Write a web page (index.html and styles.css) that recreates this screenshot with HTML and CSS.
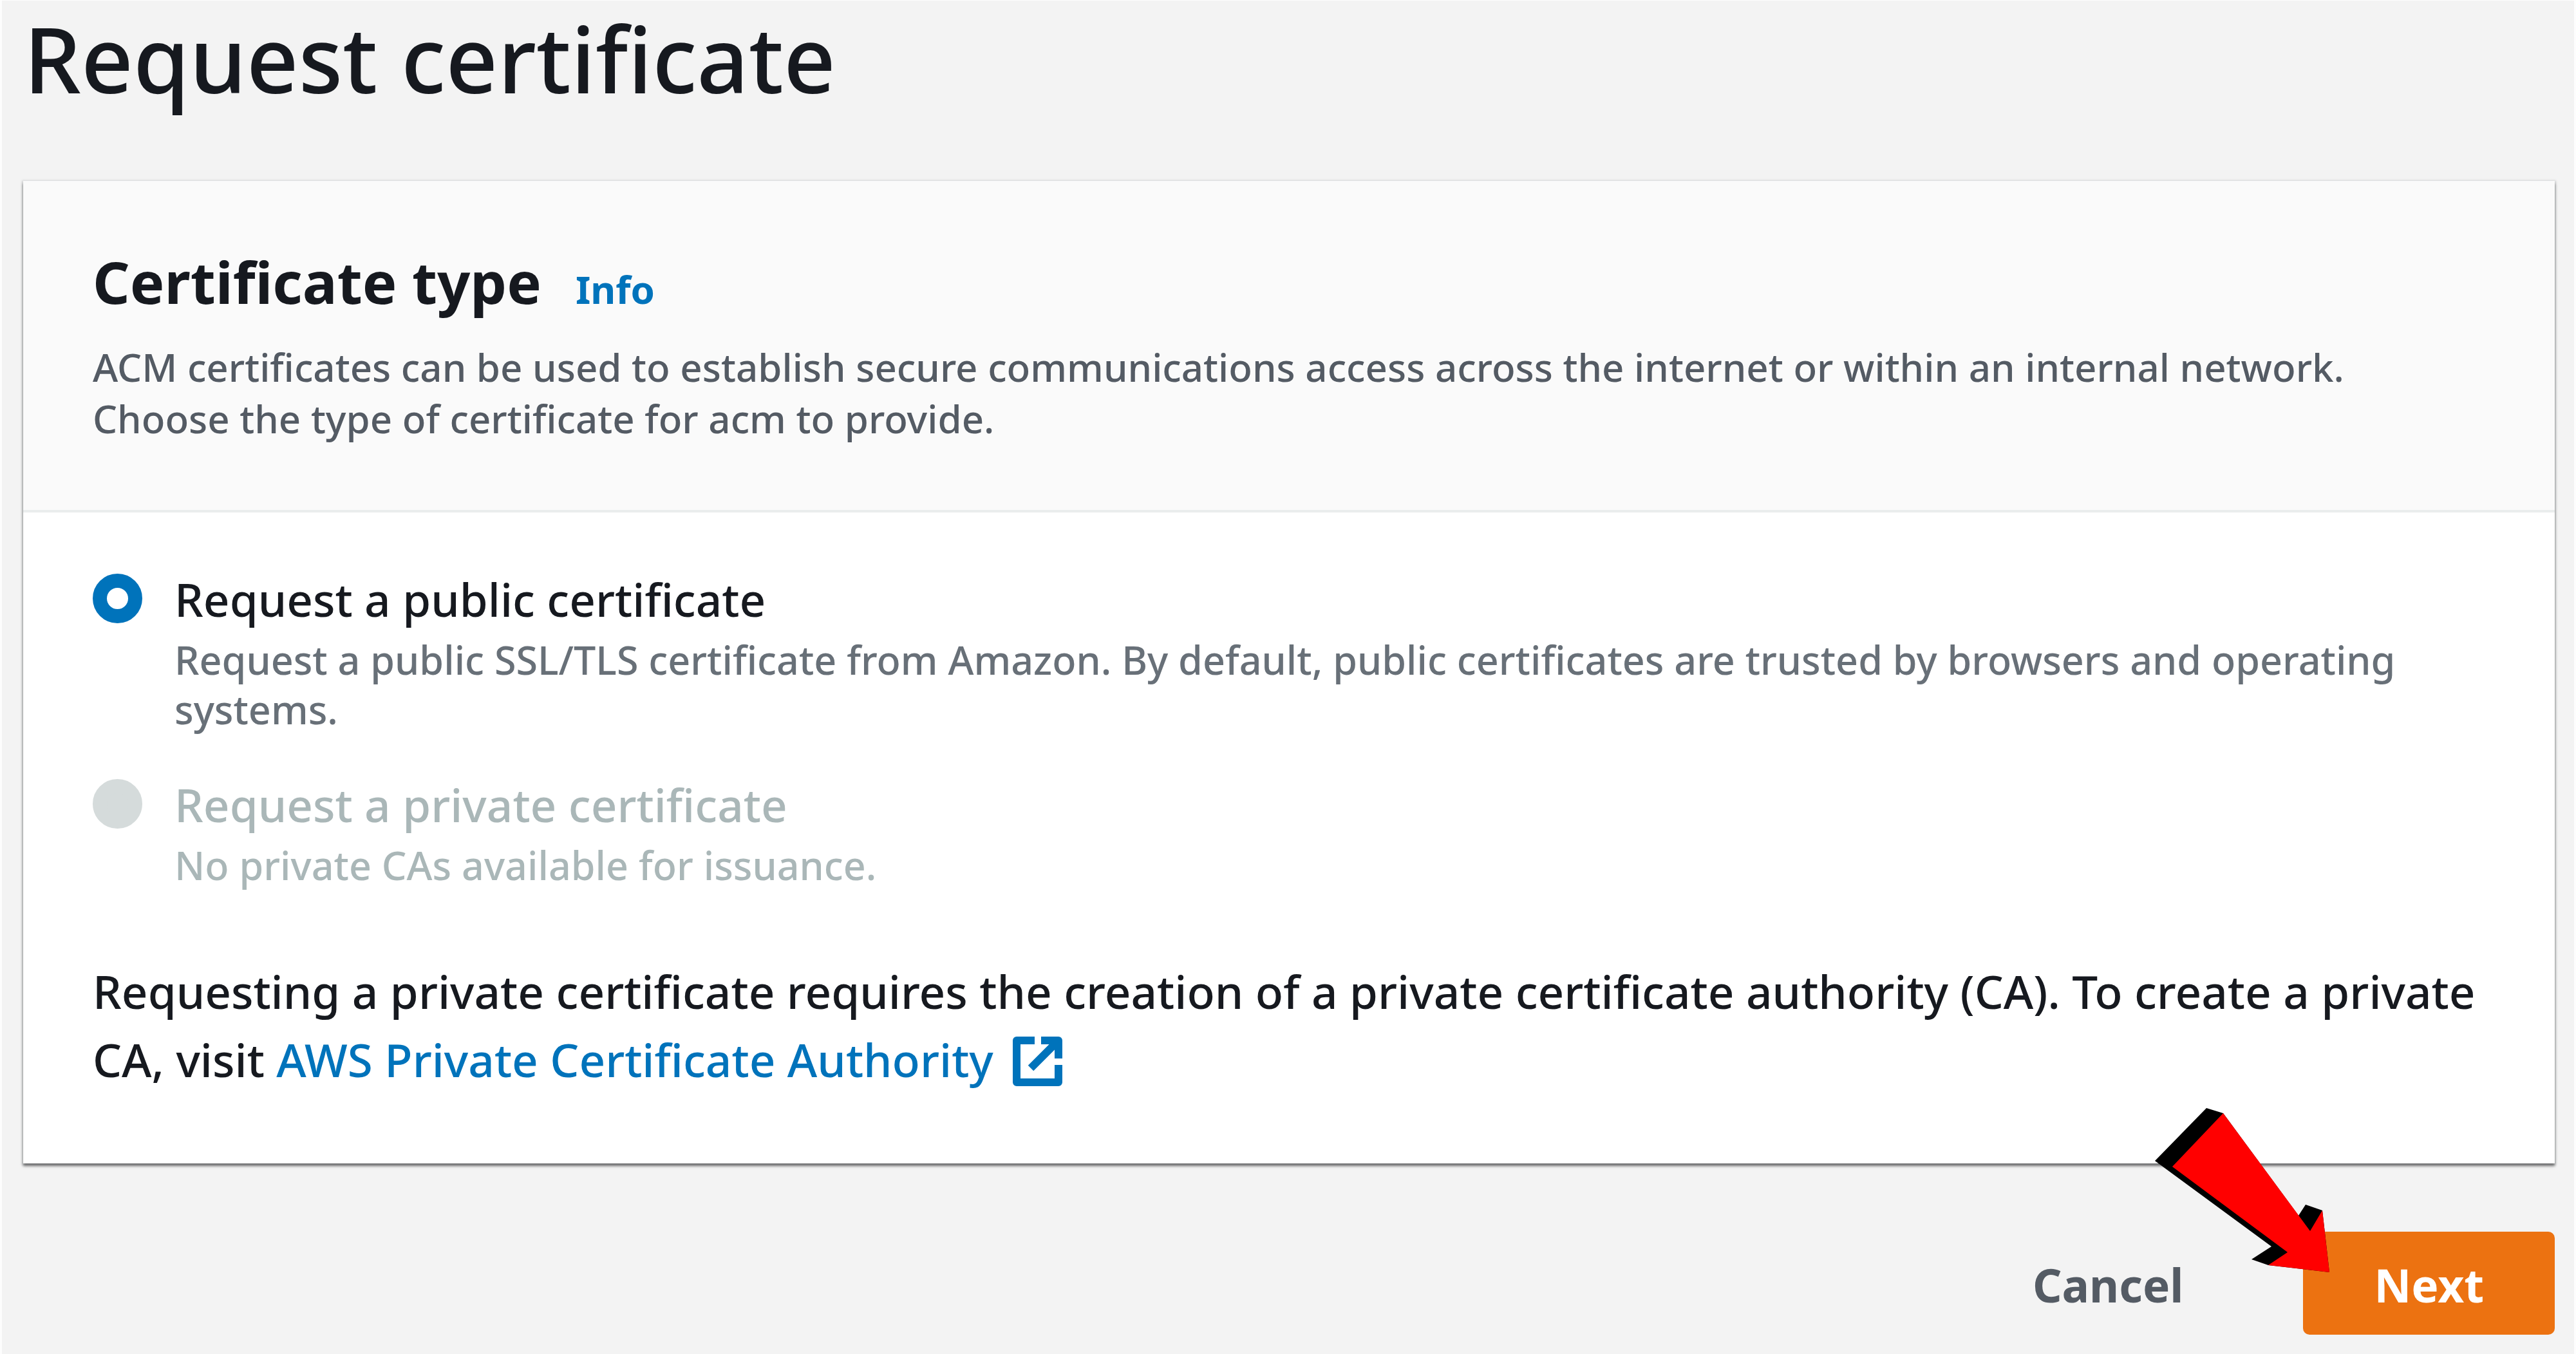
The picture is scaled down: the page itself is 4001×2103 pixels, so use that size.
FILE: index.html
```
<!DOCTYPE html>
<html lang="en">
<head>
  <meta charset="UTF-8">
  <title>Request certificate</title>
  <meta name="viewport" content="width=device-width, initial-scale=1.0">
  <link rel="stylesheet" href="styles.css">
</head>
<body>
  <main class="page">
    <h1>Request certificate</h1>

    <form class="form">
      <section class="card">
        <header class="card-header">
          <div class="card-title">
            <h2>Certificate type</h2>
            <a class="info" href="#">Info</a>
          </div>
          <p class="card-desc">ACM certificates can be used to establish secure communications access across the internet or within an internal network. Choose the type of certificate for acm to provide.</p>
        </header>

        <div class="card-body">
          <div class="options">
            <div class="option">
              <input type="radio" name="certType" id="public" aria-describedby="publicHint" checked>
              <div class="option-text">
                <label for="public">Request a public certificate</label>
                <p id="publicHint">Request a public SSL/TLS certificate from Amazon. By default, public certificates are trusted by browsers and operating systems.</p>
              </div>
            </div>
            <div class="option disabled">
              <input type="radio" name="certType" id="private" aria-describedby="privateHint" disabled>
              <div class="option-text">
                <label for="private">Request a private certificate</label>
                <p id="privateHint">No private CAs available for issuance.</p>
              </div>
            </div>
          </div>

          <p class="note">Requesting a private certificate requires the creation of a private certificate authority (CA). To create a private CA, visit <a href="#">AWS Private Certificate Authority <svg class="external" viewBox="0 0 77 77" aria-hidden="true">
            <path d="M34 6H6v65h65V44M44 6h27v28M71 6L28 49" fill="none" stroke="currentColor" stroke-width="12" stroke-linejoin="round"/>
          </svg></a></p>
        </div>
      </section>

      <div class="actions">
        <button type="button" class="btn cancel">Cancel</button>
        <div class="next-wrap">
          <button type="submit" class="btn next">Next</button>
          <svg class="pointer" viewBox="0 0 271 255" aria-hidden="true">
            <path d="M80 0L106 8L223 167L234 150L260 159L271 255L176 244L150 235L181 215L0 82Z" fill="#000"/>
            <path d="M106 8L241 191L260 159L271 255L176 244L206 224L27 91Z" fill="#f00"/>
          </svg>
        </div>
      </div>
    </form>
  </main>
</body>
</html>
```
FILE: styles.css
```
* {
  box-sizing: border-box;
}

body {
  margin: 0;
  font-family: 'Noto Sans', sans-serif;
  font-size: 71px;
  font-weight: 500;
  color: #16191f;
  background: #f3f3f3;
}

h1, h2, p {
  margin: 0;
}

a {
  color: #0073bb;
  text-decoration: none;
}

.page {
  min-height: 100vh;
  padding: 0 30px 30px;
  border: solid #fdfdfd;
  border-width: 1px 3px 0;
}

h1 {
  padding-left: 4px;
  font-size: 141px;
  font-weight: 500;
  line-height: 178px;
}

.card {
  margin: 102px 0 106px 3px;
  background: #fff;
  box-shadow: 0 4px 4px 0 rgba(0, 0, 0, 0.5), 0 1px 3px 2px rgba(0, 28, 36, 0.12);
}

.card-header {
  padding: 96px 108px 102px;
  background: #fafafa;
  border-bottom: 4px solid #eaeded;
}

.card-title {
  display: flex;
  align-items: baseline;
  gap: 53px;
}

h2 {
  font-size: 90px;
  font-weight: 700;
  line-height: 120px;
}

.info {
  font-size: 60px;
  font-weight: 700;
  line-height: 80px;
}

.card-desc {
  margin-top: 33px;
  font-size: 60px;
  line-height: 80px;
  color: #545b64;
}

.card-body {
  padding: 90px 108px 108px;
}

.options {
  display: flex;
  flex-direction: column;
  gap: 65px;
}

.option {
  display: flex;
  align-items: flex-start;
  gap: 50px;
}

.option input {
  appearance: none;
  flex: none;
  width: 77px;
  height: 77px;
  margin: 5px 0 0;
  border: 22px solid #0073bb;
  border-radius: 50%;
  background: #fff;
}

.option label {
  display: block;
  line-height: 90px;
}

.option p {
  margin-top: 10px;
  font-size: 61px;
  line-height: 77px;
  color: #687078;
}

.option.disabled input {
  border-color: #d5dbdb;
  background: #d5dbdb;
}

.option.disabled label,
.option.disabled p {
  color: #aab7b8;
}

.note {
  margin-top: 105px;
  line-height: 106px;
}

.external {
  width: 77px;
  height: 77px;
  margin-left: 12px;
  vertical-align: -14px;
}

.actions {
  display: flex;
  justify-content: flex-end;
  gap: 76px;
}

.btn {
  height: 160px;
  padding: 4px 110px 0;
  border: none;
  border-radius: 10px;
  font-family: inherit;
  font-size: 71px;
  font-weight: 700;
  cursor: pointer;
}

.cancel {
  background: none;
  color: #545b64;
}

.next {
  background: #ec7211;
  color: #fff;
}

.next-wrap {
  position: relative;
}

/* arrow lies over the card edge and the Next button */
.pointer {
  position: absolute;
  left: -230px;
  top: -192px;
  width: 271px;
  height: 255px;
  pointer-events: none;
}
```
